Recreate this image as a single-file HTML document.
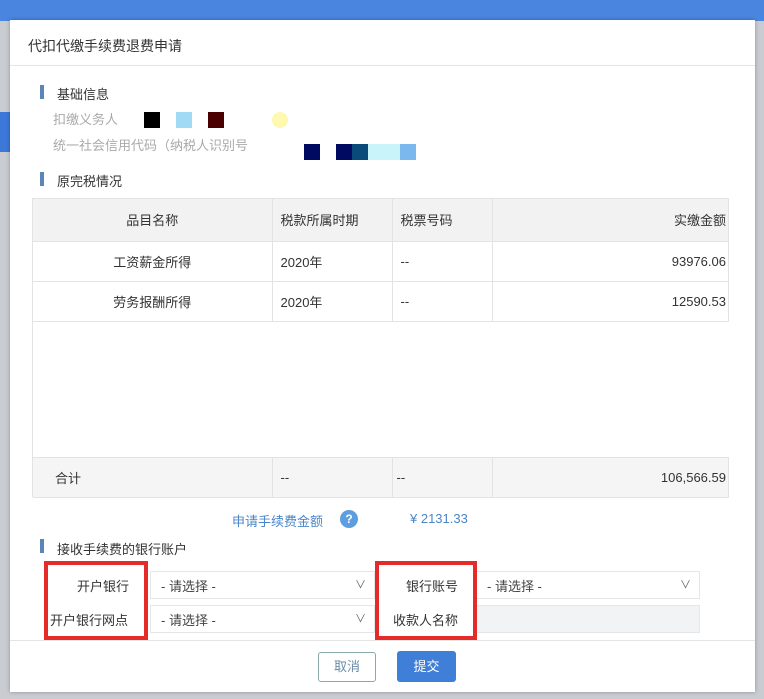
<!DOCTYPE html>
<html><head><meta charset="utf-8"><style>
*{margin:0;padding:0;box-sizing:border-box}
body{width:764px;height:699px;position:relative;overflow:hidden;background:#c9ccd1;font-family:"Liberation Sans","Noto Sans CJK SC",sans-serif;font-size:13px;color:#333}
.a{position:absolute}
.t{position:absolute;white-space:nowrap}
.bar{width:4px;height:14px;background:#5b87b8;position:absolute}
td{border-right:1px solid #e3e3e3;border-bottom:1px solid #e3e3e3;font-size:13px}
.sel{position:absolute;height:28px;border:1px solid #e6e6e6;background:#fff;font-size:13px;padding:4px 10px;color:#444}
.sel span{position:absolute;right:8px;top:4px;font-size:11px;color:#666}
.red{position:absolute;border:4px solid #e52a2a}
</style></head><body>
<div class="a" style="left:0;top:0;width:764px;height:21px;background:#4a86e0"></div>
<div class="a" style="left:0;top:112px;width:10px;height:40px;background:#3c78d8"></div>
<div class="a" style="left:10px;top:20px;width:745px;height:672px;background:#fff;box-shadow:0 0 4px rgba(0,0,0,.3)"></div>
<div class="t" style="left:28px;top:36px;font-size:14px;color:#333">代扣代缴手续费退费申请</div>
<div class="a" style="left:10px;top:65px;width:745px;height:1px;background:#e5e5e5"></div>
<div class="bar" style="left:40px;top:85px"></div>
<div class="t" style="left:57px;top:84px">基础信息</div>
<div class="t" style="left:53px;top:109px;color:#aaa">扣缴义务人</div>
<div class="a" style="left:144px;top:112px;width:16px;height:16px;background:#000"></div>
<div class="a" style="left:176px;top:112px;width:16px;height:16px;background:#a0daf5"></div>
<div class="a" style="left:208px;top:112px;width:16px;height:16px;background:#4a0000"></div>
<div class="a" style="left:272px;top:112px;width:16px;height:16px;background:#fff8b0;border-radius:50%"></div>
<div class="t" style="left:53px;top:135px;color:#aaa">统一社会信用代码（纳税人识别号</div>
<div class="a" style="left:304px;top:144px;width:16px;height:16px;background:#000a60"></div>
<div class="a" style="left:336px;top:144px;width:16px;height:16px;background:#000a60"></div>
<div class="a" style="left:352px;top:144px;width:16px;height:16px;background:#0a4a7a"></div>
<div class="a" style="left:368px;top:144px;width:32px;height:16px;background:#c8f4fa"></div>
<div class="a" style="left:400px;top:144px;width:16px;height:16px;background:#7ab8ee"></div>
<div class="bar" style="left:40px;top:172px"></div>
<div class="t" style="left:57px;top:171px">原完税情况</div>
<div class="a" style="left:32px;top:198px;width:697px;height:299px;border:1px solid #e3e3e3;border-right:none">
<table style="border-collapse:collapse;width:696px">
<tr style="height:42px;background:#f2f2f2"><td style="width:239px;text-align:center">品目名称</td><td style="width:120px;padding-left:8px">税款所属时期</td><td style="width:100px;padding-left:8px">税票号码</td><td style="text-align:right;padding-right:2px">实缴金额</td></tr>
<tr style="height:40px"><td style="text-align:center">工资薪金所得</td><td style="padding-left:8px">2020年</td><td style="padding-left:8px">--</td><td style="text-align:right;padding-right:2px">93976.06</td></tr>
<tr style="height:40px"><td style="text-align:center">劳务报酬所得</td><td style="padding-left:8px">2020年</td><td style="padding-left:8px">--</td><td style="text-align:right;padding-right:2px">12590.53</td></tr>
<tr style="height:136px"><td style="border-right:none"></td><td style="border-right:none"></td><td style="border-right:none"></td><td style="border-right:none"></td></tr>
<tr style="height:40px;background:#f5f5f5"><td style="padding-left:22px">合计</td><td style="padding-left:8px">--</td><td style="padding-left:4px">--</td><td style="text-align:right;padding-right:2px">106,566.59</td></tr>
</table></div>
<div class="t" style="left:232px;top:511px;color:#4a86c8">申请手续费金额</div>
<div class="a" style="left:340px;top:510px;width:18px;height:18px;border-radius:50%;background:#5d9ee0;color:#fff;font-size:12px;text-align:center;line-height:18px;font-weight:bold">?</div>
<div class="t" style="left:410px;top:511px;color:#4a86c8">¥ 2131.33</div>
<div class="bar" style="left:40px;top:539px"></div>
<div class="t" style="left:57px;top:539px">接收手续费的银行账户</div>
<div class="sel" style="left:150px;top:571px;width:225px">- 请选择 -<span>∨</span></div>
<div class="sel" style="left:150px;top:605px;width:225px">- 请选择 -<span>∨</span></div>
<div class="sel" style="left:476px;top:571px;width:224px">- 请选择 -<span>∨</span></div>
<div class="a" style="left:476px;top:605px;width:224px;height:28px;background:#f2f3f5;border:1px solid #e6e6e6"></div>
<div class="t" style="left:77px;top:576px">开户银行</div>
<div class="t" style="left:50px;top:610px">开户银行网点</div>
<div class="t" style="left:406px;top:576px">银行账号</div>
<div class="t" style="left:393px;top:610px">收款人名称</div>
<div class="red" style="left:44px;top:561px;width:104px;height:79px"></div>
<div class="red" style="left:375px;top:561px;width:102px;height:79px"></div>
<div class="a" style="left:10px;top:640px;width:745px;height:1px;background:#e5e5e5"></div>
<div class="a" style="left:318px;top:652px;width:58px;height:30px;border:1px solid #8aa;border-radius:3px;text-align:center;line-height:28px;color:#6a8aa8">取消</div>
<div class="a" style="left:397px;top:651px;width:59px;height:31px;background:#3f7fd8;border-radius:3px;text-align:center;line-height:31px;color:#fff">提交</div>
</body></html>
